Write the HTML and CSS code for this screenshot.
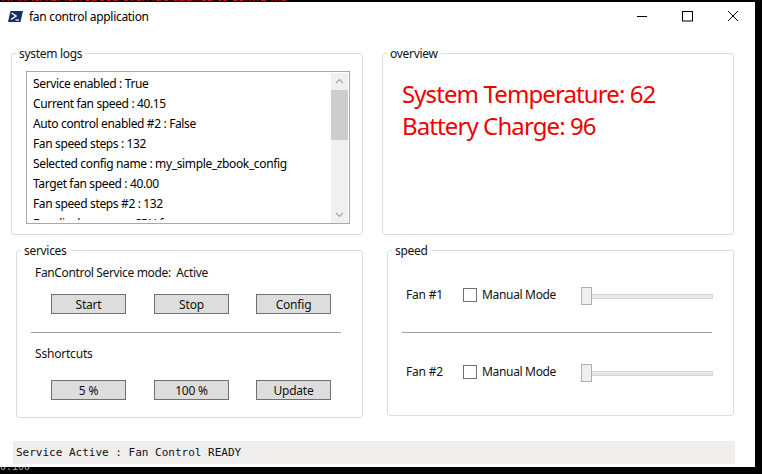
FILE: index.html
```html
<!DOCTYPE html>
<html lang="en">
<head>
<meta charset="utf-8">
<title>fan control application</title>
<link rel="stylesheet" href="styles.css">
</head>
<body>
<div class="top-strip"><span>WARNING: fan speed override applied to config file</span></div>
<main class="window">
  <header class="titlebar">
    <svg class="app-icon" width="15" height="11" viewBox="0 0 15 11"><path d="M2.500 0H15L12.500 11H0Z" fill="#16305f"/><path d="M3.500 2L8 5L3 8.500" fill="none" stroke="#fff" stroke-width="1.500"/><path d="M7.500 9H11" stroke="#fff" stroke-width="1.200"/></svg>
    <span class="app-title">fan control application</span>
    <div class="controls">
      <svg class="ctl-min" width="12" height="12" viewBox="0 0 12 12"><path d="M1 6.500H11" stroke="#000"/></svg>
      <svg width="12" height="12" viewBox="0 0 12 12"><rect x="0.500" y="1.500" width="10" height="9.500" fill="none" stroke="#000"/></svg>
      <svg width="12" height="12" viewBox="0 0 12 12"><path d="M1 1L11 11M11 1L1 11" stroke="#000"/></svg>
    </div>
  </header>
  <div class="panels">
    <div class="row row-top">
      <fieldset class="group logs">
        <legend>system logs</legend>
        <div class="listbox">
          <ul class="lines">
            <li>Service enabled : True</li>
            <li>Current fan speed : 40.15</li>
            <li>Auto control enabled #2 : False</li>
            <li>Fan speed steps : 132</li>
            <li>Selected config name : my_simple_zbook_config</li>
            <li>Target fan speed : 40.00</li>
            <li>Fan speed steps #2 : 132</li>
            <li>Fan display name : CPU fan</li>
          </ul>
          <div class="scrollbar">
            <svg width="17" height="17" viewBox="0 0 17 17"><path d="M5 10L8.500 6.500L12 10" fill="none" stroke="#a6a6a6" stroke-width="1.200"/></svg>
            <div class="track"><div class="thumb"></div></div>
            <svg width="17" height="17" viewBox="0 0 17 17"><path d="M5 7L8.500 10.500L12 7" fill="none" stroke="#a6a6a6" stroke-width="1.200"/></svg>
          </div>
        </div>
      </fieldset>
      <fieldset class="group overview">
        <legend>overview</legend>
        <p class="big first">System Temperature: 62</p>
        <p class="big">Battery Charge: 96</p>
      </fieldset>
    </div>
    <div class="row row-bottom">
      <fieldset class="group services">
        <legend>services</legend>
        <div class="label mode">FanControl Service mode:&nbsp; Active</div>
        <div class="buttons"><button>Start</button><button>Stop</button><button>Config</button></div>
        <hr class="rule">
        <div class="label short">Sshortcuts</div>
        <div class="buttons"><button>5 %</button><button>100 %</button><button>Update</button></div>
      </fieldset>
      <fieldset class="group speed">
        <legend>speed</legend>
        <div class="fan fan-one">
          <span class="fan-name">Fan #1</span>
          <span class="check"></span>
          <span class="manual">Manual Mode</span>
          <div class="slider"><span class="knob"></span><span class="rail"></span></div>
        </div>
        <hr class="rule">
        <div class="fan fan-two">
          <span class="fan-name">Fan #2</span>
          <span class="check"></span>
          <span class="manual">Manual Mode</span>
          <div class="slider"><span class="knob"></span><span class="rail"></span></div>
        </div>
      </fieldset>
    </div>
  </div>
  <footer class="status">Service Active : Fan Control READY</footer>
</main>
<div class="bottom-strip"><span>0.100</span></div>
</body>
</html>
```

FILE: styles.css
```css
* { box-sizing: border-box; }
html, body { margin: 0; height: 100%; }
body {
  width: 762px;
  height: 474px;
  overflow: hidden;
  background: #000;
  font-family: "Noto Sans", "Open Sans", sans-serif;
  font-size: 12px;
  color: #111;
}
.top-strip {
  height: 2px;
  overflow: hidden;
  color: #e01010;
  font-size: 12px;
  line-height: 12px;
}
.top-strip span { display: block; margin-top: -9px; white-space: nowrap; }
.window {
  width: 755px;
  height: 465px;
  background: #fff;
  display: flex;
  flex-direction: column;
}
.titlebar {
  height: 29px;
  display: flex;
  align-items: center;
  padding-left: 8px;
  flex: none;
}
.app-icon { flex: none; margin-right: 6px; }
.app-title { font-size: 12px; letter-spacing: -0.3px; color: #000; }
.controls {
  margin-left: auto;
  display: flex;
  gap: 33px;
  padding-right: 16px;
  margin-top: -1px;
}
.controls svg { display: block; }
.controls .ctl-min { margin-right: 1px; }
.panels { padding-top: 14px; flex: none; display: flex; flex-direction: column; }
.row { display: flex; }
.row-top { height: 197px; padding-left: 11px; gap: 19px; }
.row-bottom { padding-left: 16px; gap: 24px; }
.group {
  margin: 0;
  min-width: 0;
  border: 1px solid #d5dfe5;
  border-radius: 3px;
  padding: 0;
}
.group legend {
  padding: 2px 3px 0 3px;
  margin-left: 4px;
  line-height: 14px;
  letter-spacing: -0.3px;
  color: #111;
}
.logs { width: 352px; height: 190px; }
.overview { width: 352px; height: 190px; }
.listbox {
  width: 324px;
  height: 153px;
  margin: 10px 0 0 14px;
  border: 1px solid #a9a9a9;
  display: flex;
  background: #fff;
  overflow: hidden;
}
.lines {
  list-style: none;
  margin: 0;
  padding: 2px 0 0 6px;
  flex: 1;
  height: 148px;
  overflow: hidden;
}
.lines li { height: 20px; line-height: 20px; letter-spacing: -0.36px; white-space: nowrap; color: #000; }
.scrollbar { width: 17px; flex: none; background: #f0f0f0; display: flex; flex-direction: column; margin: 1px 1px 0 0; }
.scrollbar svg { display: block; flex: none; }
.track { flex: 1; }
.thumb { height: 50px; background: #cdcdcd; }
.big {
  margin: 0 0 0 19px;
  height: 32px;
  line-height: 32px;
  font-size: 24px;
  letter-spacing: -0.9px;
  color: #f00000;
  white-space: nowrap;
}
.big.first { margin-top: 17px; }
.services { width: 347px; height: 176px; }
.speed { width: 347px; height: 174px; }
.label { letter-spacing: -0.35px; padding-left: 18px; line-height: 16px; }
.mode { margin-top: 7px; }
.buttons { display: flex; margin-left: 34px; gap: 28px; }
.buttons button {
  width: 75px;
  height: 20px;
  padding: 2px 0 0;
  margin: 0;
  border: 1px solid #707070;
  border-radius: 0;
  background: #dddddd;
  font: inherit;
  letter-spacing: -0.2px;
  color: #111;
  line-height: 16px;
}
.services .buttons { margin-top: 13px; }
.buttons button:nth-child(2) { margin-right: -1px; }
.rule { height: 1px; border: 0; background: #a0a0a0; margin: 18px 0 0 14px; width: 310px; }
.short { margin-top: 13px; letter-spacing: -0.2px; }
.services .short + .buttons { margin-top: 18px; }
.fan { display: flex; align-items: center; height: 20px; padding-left: 18px; }
.fan-one { margin-top: 28px; }
.fan-two { margin-top: 30px; }
.speed .rule { margin-top: 26px; }
.fan-name { width: 57px; letter-spacing: -0.2px; margin-top: -4px; }
.check { width: 14px; height: 14px; border: 1px solid #707070; background: #fff; flex: none; margin-top: -2px; }
.manual { margin-left: 5px; width: 99px; letter-spacing: -0.33px; margin-top: -3px; }
.slider { display: flex; align-items: center; width: 132px; height: 20px; }
.knob { width: 11px; height: 18px; background: #efefef; border: 1px solid #b0b0b0; flex: none; }
.rail { flex: 1; height: 5px; background: #e7e7e7; border: 1px solid #d6d6d6; border-left: 0; }
.status {
  margin: 23px 0 0 13px;
  width: 722px;
  height: 23px;
  background: #f0eded;
  font-family: "DejaVu Sans Mono", monospace;
  font-size: 11px;
  line-height: 24px;
  padding-left: 3px;
  color: #111;
  flex: none;
}
.bottom-strip { height: 7px; overflow: hidden; color: #aaa; font-family: "DejaVu Sans Mono", monospace; font-size: 10px; line-height: 0; }
.bottom-strip span { white-space: nowrap; }
```
